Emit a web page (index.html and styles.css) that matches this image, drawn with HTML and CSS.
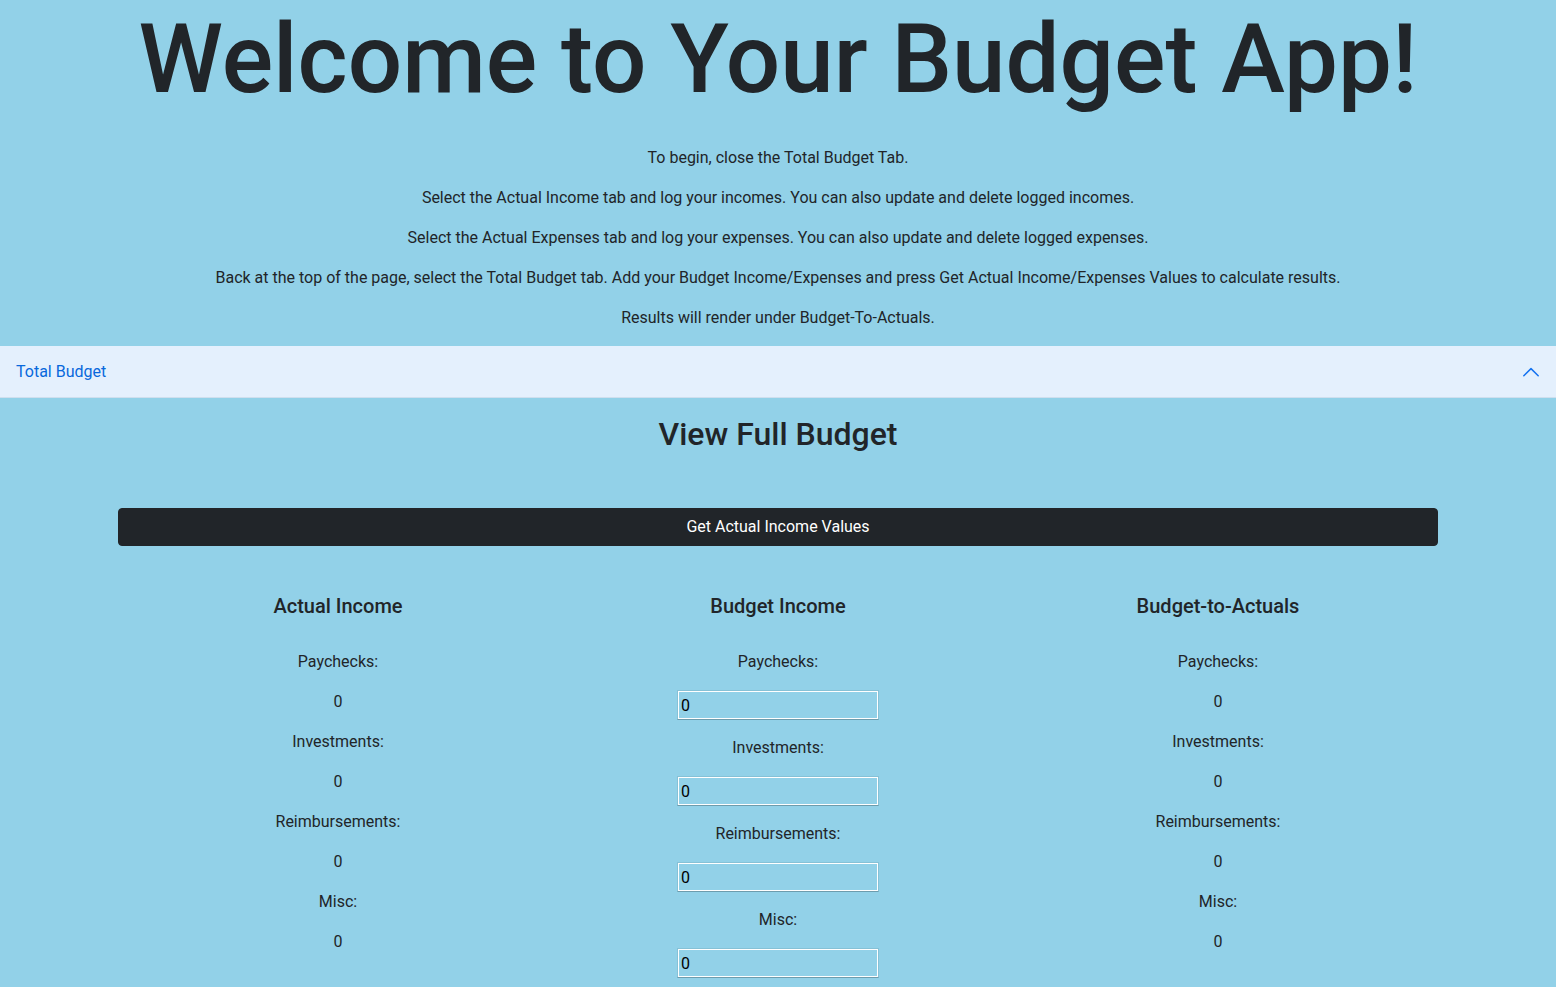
FILE: index.html
```html
<!DOCTYPE html>
<html lang="en">
<head>
<meta charset="utf-8">
<meta name="viewport" content="width=device-width, initial-scale=1">
<title>Budget App</title>
<link rel="stylesheet" href="styles.css">
</head>
<body>
<header class="intro">
  <h1 class="title">Welcome to Your Budget App!</h1>
  <p>To begin, close the Total Budget Tab.</p>
  <p>Select the Actual Income tab and log your incomes. You can also update and delete logged incomes.</p>
  <p>Select the Actual Expenses tab and log your expenses. You can also update and delete logged expenses.</p>
  <p>Back at the top of the page, select the Total Budget tab. Add your Budget Income/Expenses and press Get Actual Income/Expenses Values to calculate results.</p>
  <p>Results will render under Budget-To-Actuals.</p>
</header>
<main>
  <button class="accordion-button" type="button" aria-expanded="true" aria-controls="total-budget">
    Total Budget
    <svg class="chevron" viewBox="0 0 16 16" aria-hidden="true"><path d="M1.6 11.4 8 5l6.4 6.4"/></svg>
  </button>
  <section class="panel" id="total-budget">
    <h2 class="panel-title">View Full Budget</h2>
    <div class="container">
      <button class="fetch-button" type="button">Get Actual Income Values</button>
      <div class="columns">
        <section class="column">
          <h5 class="column-title">Actual Income</h5>
          <p>Paychecks:</p><p>0</p>
          <p>Investments:</p><p>0</p>
          <p>Reimbursements:</p><p>0</p>
          <p>Misc:</p><p>0</p>
        </section>
        <form class="column">
          <h5 class="column-title">Budget Income</h5>
          <label for="paychecks">Paychecks:</label><input id="paychecks" type="text" value="0">
          <label for="investments">Investments:</label><input id="investments" type="text" value="0">
          <label for="reimbursements">Reimbursements:</label><input id="reimbursements" type="text" value="0">
          <label for="misc">Misc:</label><input id="misc" type="text" value="0">
        </form>
        <section class="column">
          <h5 class="column-title">Budget-to-Actuals</h5>
          <p>Paychecks:</p><p>0</p>
          <p>Investments:</p><p>0</p>
          <p>Reimbursements:</p><p>0</p>
          <p>Misc:</p><p>0</p>
        </section>
      </div>
    </div>
  </section>
</main>
</body>
</html>
```

FILE: styles.css
```css
* { box-sizing: border-box; }
body {
  margin: 0;
  background: #92d1e8;
  color: #212529;
  font: 400 16px/24px Roboto, "Liberation Sans", sans-serif;
}
h1, h2, h5 { margin: 0; font-weight: 500; }
p { margin: 0 0 16px; }
button, input { font: inherit; }
.intro { text-align: center; }
.title {
  margin-bottom: 28px;
  font-size: 96px;
  line-height: 118px;
}
.accordion-button {
  display: flex;
  align-items: center;
  justify-content: space-between;
  width: 100%;
  height: 52px;
  padding: 0 16px;
  border: 0;
  background: #e4f0fd;
  box-shadow: inset 0 -1px 0 #cfdfee;
  color: #0868dc;
}
.chevron {
  width: 18px;
  height: 18px;
  fill: none;
  stroke: #1472f0;
  stroke-width: 1.3;
  stroke-linecap: round;
  stroke-linejoin: round;
}
.panel { padding: 16px 20px; text-align: center; }
.panel-title {
  margin-bottom: 54px;
  font-size: 32px;
  line-height: 40px;
}
.container { max-width: 1320px; margin: 0 auto; }
.fetch-button {
  display: block;
  width: 100%;
  padding: 6px 12px;
  border: 1px solid #212529;
  border-radius: 4px;
  background: #212529;
  color: #fff;
}
.columns {
  display: grid;
  grid-template-columns: repeat(3, 1fr);
  padding-top: 48px;
}
.column {
  display: flex;
  flex-direction: column;
  align-items: center;
}
.column-title {
  margin-bottom: 32px;
  font-size: 20px;
  line-height: 24px;
}
.column label { margin-bottom: 16px; }
.column input {
  width: 202px;
  height: 30px;
  margin-bottom: 16px;
  padding: 2px 3px;
  border: 1px solid #86c1d6;
  border-bottom-color: #6d9cad;
  box-shadow: inset 0 0 0 1px #fff;
  background: transparent;
  color: #000;
}
```
